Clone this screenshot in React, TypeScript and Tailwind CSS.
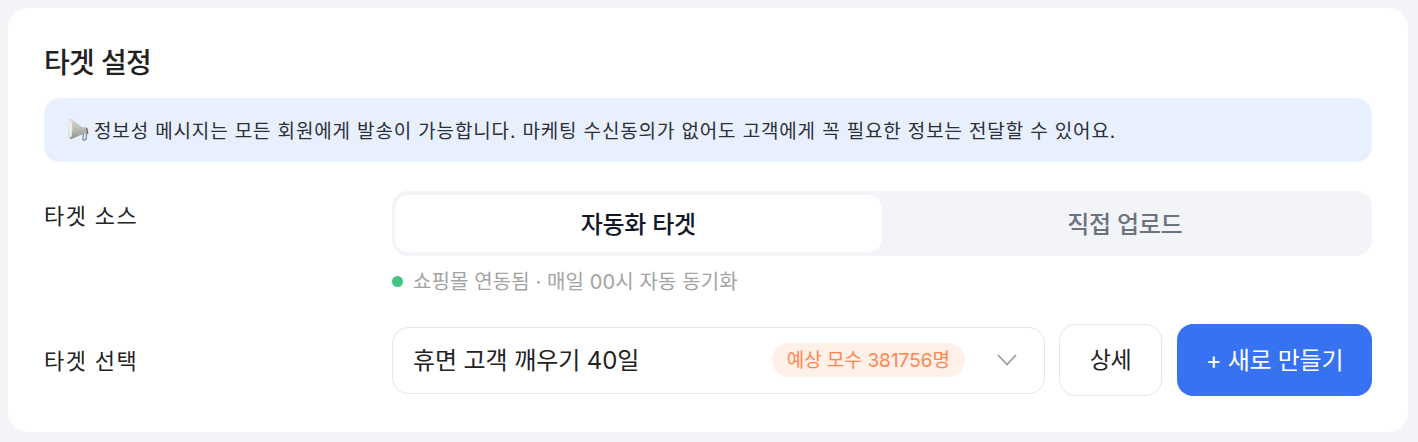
function Megaphone() {
  return (
    <svg width="24" height="24" viewBox="0 0 24 24" className="shrink-0">
      <defs>
        <linearGradient id="cone" x1="0" y1="0" x2="0" y2="1">
          <stop offset="0" stopColor="#d8d8d4" />
          <stop offset="0.55" stopColor="#b8b8b3" />
          <stop offset="1" stopColor="#8e8e8a" />
        </linearGradient>
      </defs>
      <path d="M3.500 1.500c1-.8 2-.4 3 .4l9.500 7.100 4.500.6 1 6.400-5 .3-10.500 4.500c-1.200.4-2.200.2-2.800-1C2.200 16.500 2 5 3.500 1.500z" fill="url(#cone)" />
      <ellipse cx="4.300" cy="11" rx="2" ry="9" fill="#ecece9" />
      <path d="M20 9.800l1.400.2 1 5.800-1.700.3z" fill="#6f6f6c" />
      <path d="M17.500 15.500l-.6 5.500c0 1 .9 1.300 1.900 1l1.300-.6.500-5.800" fill="#e8ecef" stroke="#5f7f98" strokeWidth="1.100" strokeLinejoin="round" />
    </svg>
  );
}

function Chevron() {
  return (
    <svg width="22" height="22" viewBox="0 0 22 22" fill="none" stroke="#9a9a9a" strokeWidth="1.800" strokeLinecap="round" strokeLinejoin="round">
      <path d="M2.500 6.500l8.500 9 8.500-9" />
    </svg>
  );
}

export default function App() {
  return (
    <div className="min-h-[442px] bg-[#f3f4f8] pt-2 pr-[10px] pb-[10px] pl-2 font-['Inter','Noto_Sans_CJK_KR',sans-serif] text-[#222222]">
      <div className="h-[424px] rounded-[20px] bg-white px-9 pt-[37px]">
        <h2 className="text-[28px] leading-9 font-medium tracking-[-0.7px]">타겟 설정</h2>
        <div className="mt-[17px] flex h-16 items-center gap-[4px] rounded-2xl bg-[#e9f0fd] px-[22px] text-[19px] tracking-[0.85px] text-[#2b2f38]">
          <Megaphone />
          <span className="pt-[5px]">정보성 메시지는 모든 회원에게 발송이 가능합니다. 마케팅 수신동의가 없어도 고객에게 꼭 필요한 정보는 전달할 수 있어요.</span>
        </div>

        <div className="mt-[29px] flex">
          <div className="w-[348px] pt-[11px] text-[22px] leading-7 tracking-[1.4px]">타겟 소스</div>
          <div className="flex-1">
            <div className="flex h-[65px] rounded-2xl bg-[#f3f4f8] p-1 pl-[3px]">
              <div className="flex flex-1 items-center justify-center rounded-[14px] bg-white pt-[3px] text-[24px] font-medium tracking-[-0.3px] text-[#111827]">자동화 타겟</div>
              <div className="flex flex-1 items-center justify-center pt-[3px] text-[24px] font-medium tracking-[-0.3px] text-[#6b7280]">직접 업로드</div>
            </div>
            <div className="mt-[13px] flex items-center gap-[10px] text-[20px] leading-6 tracking-[0.1px] text-[#a3a3a3]">
              <span className="h-[11px] w-[11px] rounded-full bg-[#3fc77f]" />
              <span className="pt-px">쇼핑몰 연동됨 · 매일 00시 자동 동기화</span>
            </div>
          </div>
        </div>

        <div className="mt-[30px] flex items-center">
          <div className="w-[348px] pt-px text-[22px] leading-7 tracking-[1.4px]">타겟 선택</div>
          <div className="flex flex-1 items-center gap-[14px]">
            <div className="flex h-[67px] flex-1 items-center rounded-2xl border border-[#e5e7eb] bg-white pr-[26px] pl-[20px]">
              <span className="flex-1 pt-px text-[24px] tracking-[-0.1px]">휴면 고객 깨우기 40일</span>
              <span className="rounded-full bg-[#fff0e8] px-[15px] pt-1 pb-[2px] text-[19px] leading-[28px] text-[#ff8552]">예상 모수 381756명</span>
              <span className="ml-[31px] flex"><Chevron /></span>
            </div>
            <button className="h-[72px] w-[103px] rounded-2xl border border-[#e5e7eb] bg-white pt-px text-[23px] tracking-[-0.3px]">상세</button>
            <button className="ml-px h-[72px] w-[195px] rounded-2xl bg-[#3672f2] pt-px text-[24px] tracking-[-0.3px] text-white">+ 새로 만들기</button>
          </div>
        </div>
      </div>
    </div>
  );
}
